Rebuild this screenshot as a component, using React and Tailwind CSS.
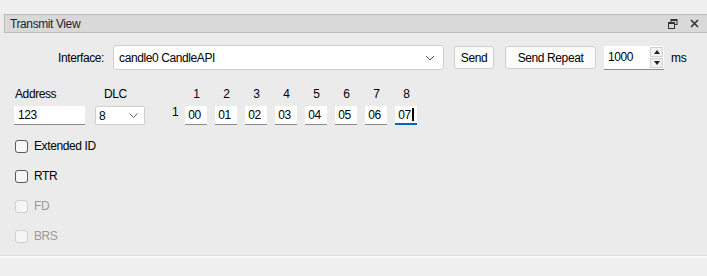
import React from "react";

function ByteBox({ value, active }) {
  return (
    <div
      className={
        "w-[22px] h-[19px] bg-white flex items-center pl-[3px] text-[12px] text-black " +
        (active ? "border-b-2 border-[#0067c0]" : "border-b border-[#8a8a8a]")
      }
    >
      <span>{value}</span>
      {active && <span className="w-[2px] h-[13px] bg-black ml-[1px]" />}
    </div>
  );
}

function Check({ label, disabled }) {
  return (
    <div className="flex items-center h-[30px] gap-[6px]">
      <div
        className={
          "w-[13px] h-[13px] rounded-[3px] border " +
          (disabled ? "border-[#cfcfcf] bg-[#f5f5f5]" : "border-[#5a5a5a] bg-[#f7f7f7]")
        }
      />
      <span className={"text-[12px] " + (disabled ? "text-[#9a9a9a]" : "text-black")}>{label}</span>
    </div>
  );
}

export default function App() {
  const bytes = ["00", "01", "02", "03", "04", "05", "06", "07"];
  return (
    <div
      className="w-[707px] h-[276px] bg-[#f0f0f0] overflow-hidden flex flex-col text-black tracking-[-0.4px]"
      style={{ fontFamily: '"Liberation Sans", Arial, sans-serif' }}
    >
      <div className="h-[14px] shrink-0" />
      <div className="bg-[#ebebeb] h-[241px] flex flex-col">
        <div className="ml-[4px] h-[19px] bg-[#d9d9d9] border border-[#bcbcbc] border-r-0 flex items-center pl-[5px] pr-[8px]">
          <span className="text-[12px] text-[#1c2430] flex-1">Transmit View</span>
          <svg width="10" height="10" viewBox="0 0 10 10" className="mr-[12px]">
            <rect x="3" y="0.5" width="6" height="5" fill="none" stroke="#333" strokeWidth="1" />
            <rect x="3" y="0.5" width="6" height="1.5" fill="#333" />
            <rect x="0.5" y="3.5" width="6" height="6" fill="#d9d9d9" stroke="#333" strokeWidth="1" />
            <rect x="0.5" y="3.5" width="6" height="1.5" fill="#333" />
          </svg>
          <svg width="9" height="9" viewBox="0 0 9 9">
            <path d="M1 1 L8 8 M8 1 L1 8" stroke="#333" strokeWidth="1.6" />
          </svg>
        </div>

        <div className="flex items-center mt-[12px] h-[25px]">
          <span className="ml-[58px] text-[12px]">Interface:</span>
          <div className="ml-[9px] w-[331px] h-[25px] bg-white border border-[#cfcfcf] rounded-[3px] flex items-center pl-[5px] pr-[8px]">
            <span className="text-[12px] flex-1">candle0 CandleAPI</span>
            <svg width="10" height="6" viewBox="0 0 10 6">
              <path d="M1 1 L5 5 L9 1" fill="none" stroke="#555" strokeWidth="1" />
            </svg>
          </div>
          <div className="ml-[10px] w-[40px] h-[23px] bg-[#fbfbfb] border border-[#cfcfcf] rounded-[3px] flex items-center justify-center text-[12px]">
            Send
          </div>
          <div className="ml-[11px] w-[91px] h-[23px] bg-[#fbfbfb] border border-[#cfcfcf] rounded-[3px] flex items-center justify-center text-[12px]">
            Send Repeat
          </div>
          <div className="ml-[8px] w-[60px] h-[24px] bg-white border-b border-[#8a8a8a] flex items-stretch">
            <span className="flex-1 pl-[4px] text-[12px] flex items-center">1000</span>
            <div className="w-[14px] flex flex-col py-[1px] pr-[1px] gap-[1px]">
              <div className="flex-1 bg-[#f0f0f0] border border-[#d0d0d0] flex items-center justify-center">
                <svg width="6" height="4" viewBox="0 0 6 4"><path d="M0 4 L3 0 L6 4 Z" fill="#222" /></svg>
              </div>
              <div className="flex-1 bg-[#f0f0f0] border border-[#d0d0d0] flex items-center justify-center">
                <svg width="6" height="4" viewBox="0 0 6 4"><path d="M0 0 L3 4 L6 0 Z" fill="#222" /></svg>
              </div>
            </div>
          </div>
          <span className="ml-[7px] text-[12px]">ms</span>
        </div>

        <div className="flex mt-[15px]">
          <div className="ml-[14px] flex flex-col gap-[3px]">
            <span className="text-[12px] h-[18px] pl-[1px] leading-[18px]">Address</span>
            <div className="w-[71px] h-[19px] bg-white border-b border-[#8a8a8a] text-[12px] pl-[4px] flex items-center">123</div>
          </div>
          <div className="ml-[10px] flex flex-col gap-[3px]">
            <span className="text-[12px] h-[18px] pl-[9px] leading-[18px]">DLC</span>
            <div className="w-[50px] h-[19px] bg-white border border-[#cfcfcf] rounded-[2px] text-[12px] pl-[3px] pr-[6px] flex items-center">
              <span className="flex-1">8</span>
              <svg width="9" height="5" viewBox="0 0 9 5">
                <path d="M0.5 0.5 L4.5 4.5 L8.5 0.5" fill="none" stroke="#666" strokeWidth="1" />
              </svg>
            </div>
          </div>
          <div className="flex flex-col ml-[27px] pt-[20px]">
            <span className="text-[12px] leading-[15px]">1</span>
          </div>
          <div className="flex flex-col ml-[7px] gap-[3px]">
            <div className="flex gap-[8px] h-[18px]">
              {bytes.map((b, i) => (
                <span key={i} className="w-[22px] text-center text-[12px] leading-[18px]">{i + 1}</span>
              ))}
            </div>
            <div className="flex gap-[8px]">
              {bytes.map((b, i) => (
                <ByteBox key={i} value={b} active={i === 7} />
              ))}
            </div>
          </div>
        </div>

        <div className="ml-[15px] mt-[6px] flex flex-col">
          <Check label="Extended ID" />
          <Check label="RTR" />
          <Check label="FD" disabled />
          <Check label="BRS" disabled />
        </div>
      </div>
      <div className="h-[1px] bg-[#dedede]" />
      <div className="h-[2px] bg-[#fafafa]" />
    </div>
  );
}
